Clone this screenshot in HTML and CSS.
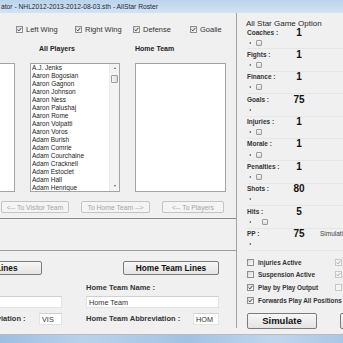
FILE: index.html
```
<!DOCTYPE html>
<html lang="en">
<head>
    <meta charset="UTF-8">
    <title>AllStar Roster</title>
    <link rel="stylesheet" href="styles.css">
</head>
<body>
<div class="screen">
    <div class="titlebar">ator - NHL2012-2013-2012-08-03.sth - AllStar Roster</div>

    <div class="window">
        <div class="roster">
            <div class="positions">
                <label class="check"><span class="box"><svg viewBox="0 0 5 5"><path d="M0.6 2.6 L1.9 3.9 L4.4 0.9" fill="none" stroke="#404040" stroke-width="1"/></svg></span>Left Wing</label>
                <label class="check"><span class="box"><svg viewBox="0 0 5 5"><path d="M0.6 2.6 L1.9 3.9 L4.4 0.9" fill="none" stroke="#404040" stroke-width="1"/></svg></span>Right Wing</label>
                <label class="check"><span class="box"><svg viewBox="0 0 5 5"><path d="M0.6 2.6 L1.9 3.9 L4.4 0.9" fill="none" stroke="#404040" stroke-width="1"/></svg></span>Defense</label>
                <label class="check"><span class="box"><svg viewBox="0 0 5 5"><path d="M0.6 2.6 L1.9 3.9 L4.4 0.9" fill="none" stroke="#404040" stroke-width="1"/></svg></span>Goalie</label>
            </div>

            <div class="list-heads">
                <span class="players-head">All Players</span>
                <span>Home Team</span>
            </div>

            <div class="lists">
                <div class="listbox visitor-list"></div>
                <div class="listbox players-list">
                    <ul class="items">
                        <li>A.J. Jenks</li>
                        <li>Aaron Bogosian</li>
                        <li>Aaron Gagnon</li>
                        <li>Aaron Johnson</li>
                        <li>Aaron Ness</li>
                        <li>Aaron Palushaj</li>
                        <li>Aaron Rome</li>
                        <li>Aaron Volpatti</li>
                        <li>Aaron Voros</li>
                        <li>Adam Burish</li>
                        <li>Adam Comrie</li>
                        <li>Adam Courchaine</li>
                        <li>Adam Cracknell</li>
                        <li>Adam Estoclet</li>
                        <li>Adam Hall</li>
                        <li>Adam Henrique</li>
                    </ul>
                    <div class="scrollbar">
                        <span class="arrow-up"></span>
                        <span class="scroll-thumb"></span>
                        <span class="arrow-down"></span>
                    </div>
                </div>
                <div class="listbox home-list"></div>
            </div>

            <div class="moves">
                <button class="move" disabled>&lt;-- To Visitor Team</button>
                <button class="move" disabled>To Home Team --&gt;</button>
                <button class="move" disabled>&lt;-- To Players</button>
            </div>

            <div class="spacer"></div>

            <div class="teams">
                <div class="team">
                    <button class="lines lines-visitor">Visitor Team Lines</button>
                    <div class="field-label">Visitor Team Name :</div>
                    <input class="text" type="text" value="Visitor Team">
                    <div class="abbr">
                        <span class="field-label">Visitor Team Abbreviation :</span>
                        <input class="text abbr-vis" type="text" value="VIS">
                    </div>
                </div>
                <div class="team">
                    <button class="lines lines-home">Home Team Lines</button>
                    <div class="field-label">Home Team Name :</div>
                    <input class="text" type="text" value="Home Team">
                    <div class="abbr">
                        <span class="field-label">Home Team Abbreviation :</span>
                        <input class="text abbr-hom" type="text" value="HOM">
                    </div>
                </div>
            </div>
        </div>

        <div class="options-panel">
            <div class="panel-title">All Star Game Option</div>

            <div class="option">
                <div class="opt-head"><span class="opt-label">Coaches :</span><span class="opt-value">1</span></div>
                <div class="slider"><span class="tick"></span><span class="knob" style="margin-left: 5px"></span></div>
            </div>
            <div class="option">
                <div class="opt-head"><span class="opt-label">Fights :</span><span class="opt-value">1</span></div>
                <div class="slider"><span class="tick"></span><span class="knob" style="margin-left: 5px"></span></div>
            </div>
            <div class="option">
                <div class="opt-head"><span class="opt-label">Finance :</span><span class="opt-value">1</span></div>
                <div class="slider"><span class="tick"></span><span class="knob" style="margin-left: 5px"></span></div>
            </div>
            <div class="option">
                <div class="opt-head"><span class="opt-label">Goals :</span><span class="opt-value">75</span></div>
                <div class="slider"><span class="tick"></span><span class="knob" style="margin-left: 116px"></span></div>
            </div>
            <div class="option">
                <div class="opt-head"><span class="opt-label">Injuries :</span><span class="opt-value">1</span></div>
                <div class="slider"><span class="tick"></span><span class="knob" style="margin-left: 5px"></span></div>
            </div>
            <div class="option">
                <div class="opt-head"><span class="opt-label">Morale :</span><span class="opt-value">1</span></div>
                <div class="slider"><span class="tick"></span><span class="knob" style="margin-left: 5px"></span></div>
            </div>
            <div class="option">
                <div class="opt-head"><span class="opt-label">Penalties :</span><span class="opt-value">1</span></div>
                <div class="slider"><span class="tick"></span><span class="knob" style="margin-left: 5px"></span></div>
            </div>
            <div class="option">
                <div class="opt-head"><span class="opt-label">Shots :</span><span class="opt-value">80</span></div>
                <div class="slider"><span class="tick"></span><span class="knob" style="margin-left: 123px"></span></div>
            </div>
            <div class="option">
                <div class="opt-head"><span class="opt-label">Hits :</span><span class="opt-value">5</span></div>
                <div class="slider"><span class="tick"></span><span class="knob" style="margin-left: 11px"></span></div>
            </div>
            <div class="option">
                <div class="opt-head"><span class="opt-label">PP :</span><span class="opt-value">75</span><span class="opt-note">Simulation Speed :</span></div>
                <div class="slider"><span class="tick"></span><span class="knob" style="margin-left: 116px"></span></div>
            </div>

            <div class="flags">
                <label class="flag"><span class="box"></span>Injuries Active</label>
                <label class="flag"><span class="box dim"><svg viewBox="0 0 5 5"><path d="M0.6 2.6 L1.9 3.9 L4.4 0.9" fill="none" stroke="#a8a8a8" stroke-width="1"/></svg></span>Fatigue</label>
                <label class="flag"><span class="box"></span>Suspension Active</label>
                <label class="flag"><span class="box dim"><svg viewBox="0 0 5 5"><path d="M0.6 2.6 L1.9 3.9 L4.4 0.9" fill="none" stroke="#a8a8a8" stroke-width="1"/></svg></span>Morale</label>
                <label class="flag"><span class="box"><svg viewBox="0 0 5 5"><path d="M0.6 2.6 L1.9 3.9 L4.4 0.9" fill="none" stroke="#404040" stroke-width="1"/></svg></span>Play by Play Output</label>
                <label class="flag"><span class="box dim"></span>Trades</label>
                <label class="flag flag-wide"><span class="box"><svg viewBox="0 0 5 5"><path d="M0.6 2.6 L1.9 3.9 L4.4 0.9" fill="none" stroke="#404040" stroke-width="1"/></svg></span>Forwards Play All Positions</label>
            </div>

            <div class="actions">
                <button class="sim">Simulate</button>
                <button class="sim sim-next">Close</button>
            </div>
        </div>
    </div>

    <div class="taskbar"></div>
</div>
</body>
</html>
```

FILE: styles.css
```
* { margin: 0; padding: 0; box-sizing: border-box; }
body {
    width: 343px;
    height: 343px;
    overflow: hidden;
    background: #f0f0f0;
    font-family: "Liberation Sans", Arial, sans-serif;
    color: #1a1a1a;
}
.screen {
    width: 343px;
    height: 343px;
    overflow: hidden;
    display: flex;
    flex-direction: column;
}
.titlebar {
    height: 13px;
    flex: none;
    line-height: 13px;
    font-size: 6.7px;
    color: #1e2833;
    padding-left: 1px;
    white-space: nowrap;
    overflow: hidden;
    background: linear-gradient(to bottom, #bcd3eb, #d4e3f3);
}
.window {
    height: 322px;
    flex: none;
    display: flex;
    background: #f0f0f0;
    border-bottom: 1px solid #b8bcc2;
}
.taskbar {
    flex: 1;
    background: linear-gradient(90deg, #9dbee2, #b9d2ec 25%, #a2c2e4 55%, #c0d6ee 80%, #a9c6e6);
}

/* left side: roster picking */
.roster {
    width: 237px;
    height: 315px;
    flex: none;
    display: flex;
    flex-direction: column;
    border-right: 1px solid #a3a3a3;
}
.positions {
    height: 26px;
    flex: none;
    padding: 12px 0 0 16px;
    display: grid;
    grid-template-columns: 59px 58px 57px auto;
}
.check {
    display: flex;
    align-items: center;
    gap: 3px;
    height: 9px;
    font-size: 7.5px;
    color: #333;
    white-space: nowrap;
}
.box {
    display: flex;
    align-items: center;
    justify-content: center;
    width: 7px;
    height: 7px;
    flex: none;
    border: 1px solid #8e8e8e;
    background: linear-gradient(135deg, #d9d9d9, #fbfbfb);
}
.box svg {
    display: block;
    width: 5px;
    height: 5px;
}
.box.dim {
    border-color: #c6c6c6;
    background: #f4f4f4;
}
.list-heads {
    height: 24px;
    flex: none;
    padding-top: 5px;
    display: flex;
    font-size: 7px;
    font-weight: bold;
    line-height: 9px;
    color: #222;
}
.players-head {
    width: 96px;
    margin-left: 39px;
}
.lists {
    height: 129px;
    flex: none;
    display: flex;
    gap: 15px;
}
.listbox {
    height: 129px;
    background: #fff;
    border: 1px solid #a4a4a4;
    overflow: hidden;
    flex: none;
}
.visitor-list {
    width: 25px;
    margin-left: -10px;
}
.players-list {
    width: 90px;
    display: flex;
}
.home-list {
    width: 91px;
}
.items {
    list-style: none;
    flex: 1;
    padding-left: 1px;
    font-size: 6.5px;
    line-height: 8px;
    color: #222;
    white-space: nowrap;
    overflow: hidden;
}
.scrollbar {
    width: 10px;
    flex: none;
    display: flex;
    flex-direction: column;
    align-items: center;
    background: #f3f3f3;
    border-left: 1px solid #ececec;
}
.arrow-up, .arrow-down {
    width: 0;
    height: 0;
    border-left: 1.5px solid transparent;
    border-right: 1.5px solid transparent;
}
.arrow-up {
    margin-top: 3px;
    border-bottom: 2px solid #606060;
}
.arrow-down {
    margin-top: auto;
    margin-bottom: 4px;
    border-top: 2px solid #606060;
}
.scroll-thumb {
    width: 7px;
    height: 8px;
    margin-top: 6px;
    border: 1px solid #9c9c9c;
    border-radius: 1px;
    background: linear-gradient(90deg, #f6f6f6, #dcdcdc);
}
.moves {
    height: 26px;
    flex: none;
    padding: 9px 0 0 1px;
    display: grid;
    grid-template-columns: 68px 69px 62px;
    column-gap: 12px;
    align-items: start;
}
.move {
    height: 12px;
    font-family: inherit;
    font-size: 6.8px;
    color: #a5a5a5;
    background: #f4f4f4;
    border: 1px solid #c4c4c4;
    border-radius: 2px;
    white-space: nowrap;
}
.spacer {
    height: 33px;
    flex: none;
    border-top: 1px solid #8c8c8c;
    border-bottom: 1px solid #9c9c9c;
}
.teams {
    display: grid;
    grid-template-columns: 133px 133px;
    column-gap: 24px;
    margin-left: -71px;
    padding-top: 10px;
}
.team {
    display: flex;
    flex-direction: column;
}
.lines {
    width: 96px;
    height: 14px;
    font-family: inherit;
    font-size: 8.3px;
    font-weight: bold;
    color: #111;
    background: linear-gradient(#f7f7f7, #e4e4e4);
    border: 1px solid #7b7b7b;
    border-radius: 2px;
    white-space: nowrap;
}
.lines-visitor {
    width: 122px;
    margin-left: -9px;
}
.lines-home {
    margin-left: 37px;
}
.field-label {
    margin-top: 8px;
    font-size: 7.5px;
    font-weight: bold;
    line-height: 10px;
    color: #333;
    white-space: nowrap;
}
.text {
    width: 133px;
    height: 12px;
    margin-top: 3px;
    padding: 0 2px;
    font-family: inherit;
    font-size: 7.3px;
    color: #333;
    background: #fff;
    border: 1px solid #e2e2e2;
    border-top-color: #d0d0d0;
    outline: none;
}
.abbr {
    height: 12px;
    margin-top: 5px;
    display: flex;
    align-items: center;
    justify-content: space-between;
}
.abbr .field-label {
    margin-top: 0;
}
.abbr .text {
    margin-top: 0;
}
.abbr-vis {
    width: 23px !important;
}
.abbr-hom {
    width: 26px !important;
}

/* right side: game options */
.options-panel {
    flex: 1;
    min-width: 0;
    overflow: hidden;
    padding-left: 10px;
}
.panel-title {
    height: 14px;
    padding-top: 7px;
    margin-left: -1px;
    font-size: 8px;
    line-height: 8px;
    color: #1f1f1f;
    white-space: nowrap;
}
.option {
    height: 22.4px;
}
.opt-head {
    height: 10px;
    display: flex;
    align-items: center;
    white-space: nowrap;
}
.opt-label {
    width: 42px;
    flex: none;
    font-size: 6.5px;
    font-weight: bold;
    color: #333;
}
.opt-value {
    width: 20px;
    flex: none;
    text-align: center;
    font-size: 10px;
    font-weight: bold;
    color: #111;
}
.opt-note {
    margin-left: 11px;
    font-size: 6.5px;
    color: #444;
}
.slider {
    height: 12.4px;
    display: flex;
    align-items: center;
    border-bottom: 1px solid #e6e6e6;
    white-space: nowrap;
}
.tick {
    width: 0;
    height: 0;
    flex: none;
    margin-left: 2px;
    border-top: 1.5px solid transparent;
    border-bottom: 1.5px solid transparent;
    border-right: 2px solid #555;
}
.knob {
    width: 6px;
    height: 6px;
    flex: none;
    border: 1px solid #9a9a9a;
    border-radius: 1px;
    background: linear-gradient(#f8f8f8, #dadada);
}
.flags {
    display: grid;
    grid-template-columns: 88px auto;
    padding-top: 5px;
}
.flag {
    height: 12.7px;
    display: flex;
    align-items: center;
    gap: 4px;
    font-size: 6.4px;
    font-weight: bold;
    color: #333;
    white-space: nowrap;
}
.flag-wide {
    grid-column: span 2;
}
.actions {
    margin-top: 6px;
    display: flex;
    gap: 23px;
}
.sim {
    width: 70px;
    height: 16px;
    flex: none;
    font-family: inherit;
    font-size: 9.5px;
    font-weight: bold;
    color: #111;
    background: linear-gradient(#f7f7f7, #e3e3e3);
    border: 1px solid #7b7b7b;
    border-radius: 2px;
}
.sim-next {
    width: 50px;
}
```
